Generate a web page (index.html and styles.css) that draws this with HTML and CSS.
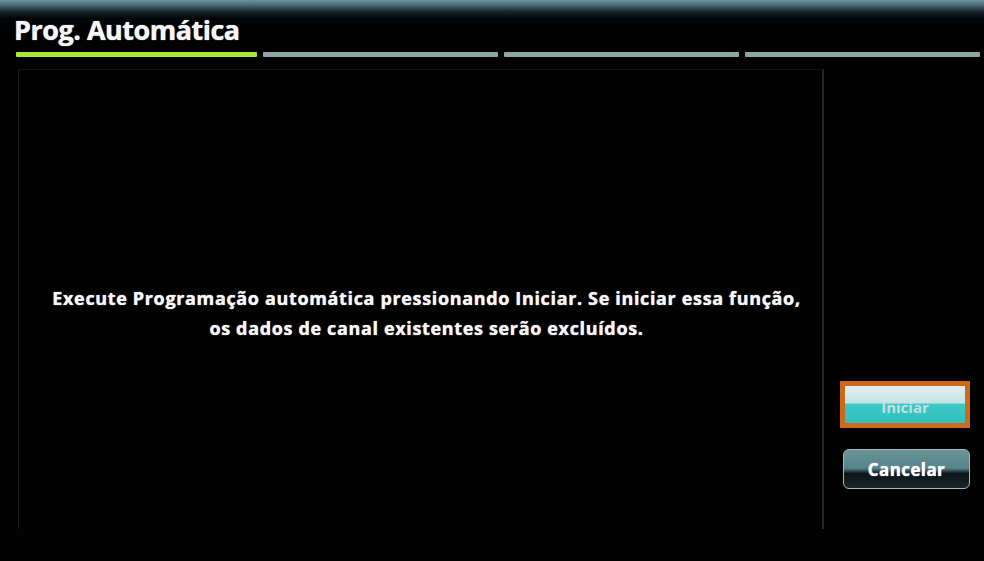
FILE: index.html
```html
<!DOCTYPE html>
<html lang="pt">
<head>
<meta charset="utf-8">
<title>Prog. Automática</title>
<link rel="stylesheet" href="styles.css">
</head>
<body>
<div class="screen">
  <header class="header">
    <h1 class="title">Prog. Automática</h1>
    <div class="steps">
      <span class="step step-active"></span>
      <span class="step"></span>
      <span class="step"></span>
      <span class="step"></span>
    </div>
  </header>
  <main class="content">
    <section class="panel">
      <p class="message">Execute Programação automática pressionando Iniciar. Se iniciar essa função,<br>os dados de canal existentes serão excluídos.</p>
    </section>
    <aside class="side">
      <button class="btn btn-start"><span>Iniciar</span></button>
      <button class="btn btn-cancel">Cancelar</button>
    </aside>
  </main>
</div>
</body>
</html>
```
FILE: styles.css
```css
html, body {
  margin: 0;
  padding: 0;
  background: #020203;
}
body {
  width: 984px;
  height: 561px;
  overflow: hidden;
  font-family: "Open Sans", "DejaVu Sans", sans-serif;
  color: #fff;
}
.screen {
  width: 984px;
  height: 561px;
  display: flex;
  flex-direction: column;
  background: linear-gradient(180deg, #6f909e 0px, #4a6a78 5px, #1c2c34 11px, #040608 18px, #020203 24px);
}
.header {
  padding: 13px 4px 0 14px;
}
.title {
  margin: 0;
  font-size: 27px;
  line-height: 33px;
  font-weight: 700;
  letter-spacing: -0.5px;
  color: #f4f6f6;
  text-shadow: 0 0 1px #fff;
}
.steps {
  display: flex;
  gap: 6px;
  margin: 6px 0 0 2px;
}
.step {
  flex: 1;
  height: 5px;
  background: #8fa4a6;
  border-radius: 1px;
}
.step-active {
  flex: 1.025;
  background: #a8e836;
}
.content {
  display: flex;
  margin-top: 12px;
}
.panel {
  width: 806px;
  height: 460px;
  margin-left: 18px;
  border-left: 1px solid #1a1d20;
  border-top: 1px solid #111416;
  border-right: 2px solid #23272a;
  display: flex;
  align-items: center;
  justify-content: center;
  box-sizing: border-box;
}
.message {
  margin: 26px 0 0 12px;
  text-align: center;
  font-size: 18px;
  line-height: 30px;
  font-weight: 700;
  letter-spacing: 0.65px;
  color: #f6f6f6;
  text-shadow: 0 0 1px #fff;
}
.side {
  display: flex;
  flex-direction: column;
  align-items: flex-start;
  padding: 312px 0 0 16px;
  gap: 21px;
}
.btn {
  font-family: "Open Sans", "DejaVu Sans", sans-serif;
  font-weight: 700;
  box-sizing: border-box;
  cursor: pointer;
}
.btn-start {
  width: 130px;
  height: 47px;
  border: 5px solid #cc6a1c;
  padding: 4px 0 0 0;
  background: linear-gradient(180deg, #e2eeee 0%, #c6e4e6 45%, #3cc8c6 50%, #32c0c0 100%);
  color: #d6e2e2;
  font-size: 15px;
}
.btn-start span {
  opacity: 0.9;
}
.btn-cancel {
  width: 127px;
  height: 40px;
  margin-left: 3px;
  border: 1.5px solid #a6b6b6;
  border-radius: 6px;
  background: linear-gradient(180deg, #6a9498 0%, #55848a 48%, #0c1416 62%, #1a2628 100%);
  color: #ffffff;
  font-size: 17px;
  letter-spacing: 0.4px;
  text-shadow: 0 0 1px #fff;
}
```
